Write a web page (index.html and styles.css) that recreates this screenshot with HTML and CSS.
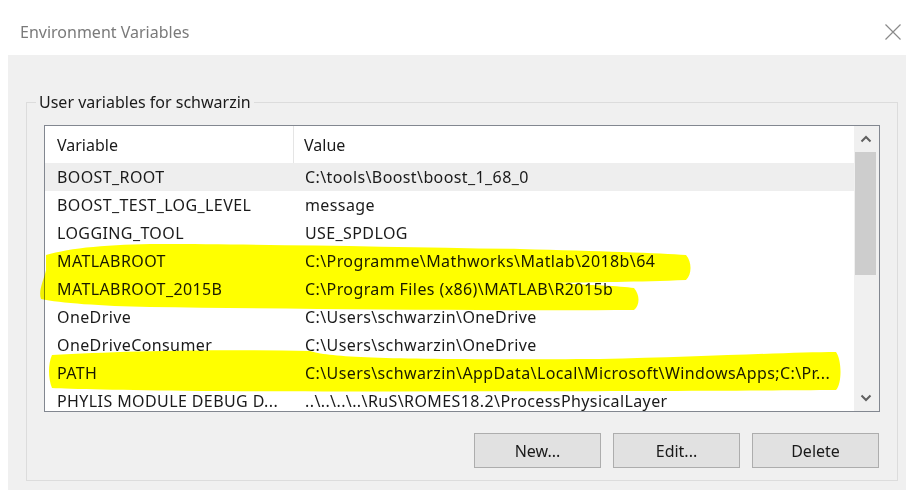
FILE: index.html
```html
<!DOCTYPE html>
<html lang="en">
<head>
<meta charset="utf-8">
<title>Environment Variables</title>
<link rel="stylesheet" href="styles.css">
</head>
<body>
<div class="window">
  <div class="titlebar">
    <span class="title">Environment Variables</span>
    <svg class="close" width="18" height="18" viewBox="0 0 18 18" aria-hidden="true">
      <path d="M1.5 1.5 L16.5 16.5 M16.5 1.5 L1.5 16.5" stroke="#8a8a8a" stroke-width="1.2" fill="none"/>
    </svg>
  </div>

  <div class="client">
    <fieldset class="group">
      <legend class="group-label">User variables for schwarzin</legend>

      <div class="listbox">
        <div class="list">
          <div class="list-head">
            <div class="cell col-var">Variable</div>
            <div class="cell col-val">Value</div>
          </div>
          <div class="row selected"><div class="cell col-var">BOOST_ROOT</div><div class="cell col-val">C:\tools\Boost\boost_1_68_0</div></div>
          <div class="row"><div class="cell col-var">BOOST_TEST_LOG_LEVEL</div><div class="cell col-val">message</div></div>
          <div class="row"><div class="cell col-var">LOGGING_TOOL</div><div class="cell col-val">USE_SPDLOG</div></div>
          <div class="row"><div class="cell col-var">MATLABROOT</div><div class="cell col-val">C:\Programme\Mathworks\Matlab\2018b\64</div></div>
          <div class="row"><div class="cell col-var">MATLABROOT_2015B</div><div class="cell col-val">C:\Program Files (x86)\MATLAB\R2015b</div></div>
          <div class="row"><div class="cell col-var">OneDrive</div><div class="cell col-val">C:\Users\schwarzin\OneDrive</div></div>
          <div class="row"><div class="cell col-var">OneDriveConsumer</div><div class="cell col-val">C:\Users\schwarzin\OneDrive</div></div>
          <div class="row"><div class="cell col-var">PATH</div><div class="cell col-val">C:\Users\schwarzin\AppData\Local\Microsoft\WindowsApps;C:\Pr...</div></div>
          <div class="row"><div class="cell col-var">PHYLIS MODULE DEBUG D...</div><div class="cell col-val">..\..\..\..\RuS\ROMES18.2\ProcessPhysicalLayer</div></div>
        </div>
        <div class="scrollbar">
          <div class="arrow">
            <svg width="12" height="8" viewBox="0 0 12 8"><path d="M1.5 6.5 L6 2 L10.5 6.5" stroke="#606060" stroke-width="2" fill="none"/></svg>
          </div>
          <div class="track"><div class="thumb"></div></div>
          <div class="arrow">
            <svg width="12" height="8" viewBox="0 0 12 8"><path d="M1.5 1.5 L6 6 L10.5 1.5" stroke="#606060" stroke-width="2" fill="none"/></svg>
          </div>
        </div>
      </div>

      <div class="buttons">
        <button class="btn btn-new">New...</button>
        <button class="btn btn-edit">Edit...</button>
        <button class="btn btn-delete">Delete</button>
      </div>
    </fieldset>
  </div>

  <!-- marker strokes laid over the list -->
  <svg class="marker" width="906" height="490" viewBox="0 0 906 490" aria-hidden="true">
    <path fill="#ffff00" d="M46 255 C70 248 110 244 160 244 C260 244 400 247 520 249 C600 251 660 253 686 255 C692 262 692 274 686 280 C640 282 590 282 556 283 C590 285 620 286 634 288 C640 295 640 305 634 310 C500 311 300 309 150 307 C100 306 60 303 41 299 C38 290 44 280 46 270 Z"/>
    <path fill="#ffff00" d="M52 355 C120 351 220 349 310 351 C330 358 400 360 600 359 C700 357 790 352 836 352 C842 360 842 384 836 390 C700 391 400 392 200 391 C120 390 70 389 52 388 C48 378 48 364 52 355 Z"/>
  </svg>
</div>
</body>
</html>
```

FILE: styles.css
```css
* {
  box-sizing: border-box;
}

html, body {
  margin: 0;
  padding: 0;
  background: #ffffff;
}

body {
  font-family: "Noto Sans", "Open Sans", sans-serif;
  font-size: 16px;
  color: #1a1a1a;
}

.window {
  position: relative;
  width: 906px;
  height: 490px;
  overflow: hidden;
  background: #ffffff;
}

/* title bar */
.titlebar {
  height: 55px;
  display: flex;
  align-items: center;
  justify-content: space-between;
  padding: 0 4px 0 20px;
}

.title {
  color: #7a7a7a;
  font-size: 16px;
  margin-top: 9px;
}

.close {
  margin-top: 9px;
  margin-right: 0;
}

/* client area */
.client {
  margin-left: 8px;
  height: 435px;
  background: #f0f0f0;
  padding: 37px 8px 0 18px;
}

.group {
  margin: 0;
  height: 389px;
  border: 1px solid #dcdcdc;
  padding: 13px 17px 0 17px;
  min-width: 0;
}

.group-label {
  margin-left: -8px;
  padding: 0 3px 0 3px;
  color: #1a1a1a;
  line-height: 20px;
}

/* list view */
.listbox {
  display: flex;
  height: 287px;
  border: 1px solid #828790;
  background: #ffffff;
  overflow: hidden;
}

.list {
  flex: 1;
  min-width: 0;
  overflow: hidden;
}

.list-head {
  display: flex;
  height: 37px;
  align-items: center;
}

.list-head .col-var {
  border-right: 1px solid #e5e5e5;
  height: 100%;
  display: flex;
  align-items: center;
}

.row {
  display: flex;
  height: 28px;
  align-items: center;
  letter-spacing: 0.4px;
}

.row.selected {
  background: #eeeeee;
}

.cell {
  white-space: nowrap;
  overflow: hidden;
}

.col-var {
  width: 249px;
  flex: none;
  padding-left: 12px;
}

.col-val {
  flex: 1;
  padding-left: 11px;
}

.list-head .col-val {
  padding-left: 10px;
}

/* vertical scrollbar */
.scrollbar {
  width: 25px;
  flex: none;
  background: #f0f0f0;
  display: flex;
  flex-direction: column;
  padding-left: 1px;
}

.arrow {
  height: 26px;
  display: flex;
  align-items: center;
  justify-content: center;
  padding-right: 2px;
}

.track {
  flex: 1;
  padding-right: 3px;
}

.thumb {
  height: 123px;
  background: #cdcdcd;
}

/* buttons */
.buttons {
  display: flex;
  justify-content: flex-end;
  gap: 12px;
  margin-top: 21px;
  padding-right: 1px;
}

.btn {
  width: 127px;
  height: 35px;
  background: #e1e1e1;
  border: 1px solid #adadad;
  font-family: inherit;
  font-size: 16px;
  color: #1a1a1a;
  padding: 0;
}

/* highlighter strokes */
.marker {
  position: absolute;
  left: 0;
  top: 0;
  pointer-events: none;
  mix-blend-mode: multiply;
}
```
